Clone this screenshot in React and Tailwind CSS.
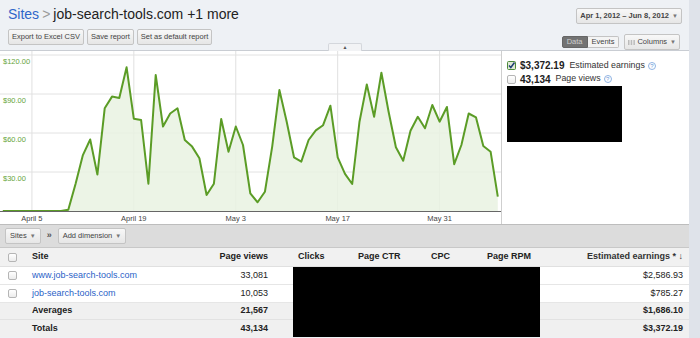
import React from 'react';

const earnings = [
  0, 0, 0, 0, 0, 0, 0, 0, 0, 1, 21, 43, 55, 28, 79, 88, 87, 110.5, 71, 70,
  21, 104.6, 65, 75, 79, 54.6, 49.5, 40.5, 12.3, 21, 70.8, 45.6, 65, 50.8,
  13.6, 6.7, 14.8, 49.5, 93, 68.7, 41.3, 38, 54.6, 62, 66, 81, 41.3, 28.5,
  20.8, 68.7, 97.4, 72.5, 106.4, 76.4, 49, 38.7, 61.8, 72.5, 63.6, 81.5,
  68.7, 80, 36, 50.8, 75, 72, 50, 45.6, 11,
];

const px = (i) => 2.8 + 7.28 * i;
const py = (v) => 160 - 1.3 * v;

const linePoints = earnings.map((v, i) => `${px(i).toFixed(1)},${py(v).toFixed(1)}`).join(' ');
const areaPoints = `${px(0)},160 ${linePoints} ${px(68).toFixed(1)},160`;

// Y axis labels and grid
const yTicks = [
  { label: '$120.00', y: 4 },
  { label: '$90.00', y: 43 },
  { label: '$60.00', y: 82 },
  { label: '$30.00', y: 121 },
];

const xTicks = [
  { label: 'April 5', i: 4 },
  { label: 'April 19', i: 18 },
  { label: 'May 3', i: 32 },
  { label: 'May 17', i: 46 },
  { label: 'May 31', i: 60 },
];

const rows = [
  { site: 'www.job-search-tools.com', views: '33,081', earn: '$2,586.93' },
  { site: 'job-search-tools.com', views: '10,053', earn: '$785.27' },
];

const Btn = ({ children, className = '' }) => (
  <div
    className={`h-[16px] px-[3px] flex items-center border border-[#c4c4c4] rounded-[2px] bg-gradient-to-b from-[#f8f8f8] to-[#e6e6e6] text-[7.5px] text-[#444] ${className}`}
  >
    {children}
  </div>
);

const Caret = () => <span className="ml-[3px] text-[6px] text-[#777]">▼</span>;

const Help = () => (
  <span className="ml-[3px] inline-flex w-[8px] h-[8px] rounded-full border border-[#8fb3e3] text-[6px] leading-none text-[#6a9ad8] items-center justify-center">
    ?
  </span>
);

const Box = () => (
  <span className="inline-block w-[9px] h-[9px] rounded-[2px] border border-[#b5b5b5] bg-gradient-to-b from-white to-[#ececec]" />
);

const App = () => {
  return (
    <div
      className="w-[700px] h-[338px] flex overflow-hidden bg-[#dfe3ea]"
      style={{ fontFamily: '"Liberation Sans", Arial, sans-serif' }}
    >
      <div className="w-[689px] flex flex-col bg-[#eef1f5]">
        {/* Header */}
        <div className="h-[50px] flex justify-between pl-[8px] pr-[7px]">
          <div className="flex flex-col">
            <div className="pt-[6px] text-[14px] leading-[16px] text-[#222]">
              <span className="text-[#2f66c9]">Sites</span>
              <span className="text-[#9a9a9a] mx-[3px]">&gt;</span>
              job-search-tools.com +1 more
            </div>
            <div className="mt-[7px] flex gap-[3px]">
              <Btn>Export to Excel CSV</Btn>
              <Btn>Save report</Btn>
              <Btn>Set as default report</Btn>
            </div>
          </div>
          <div className="flex flex-col items-end">
            <Btn className="mt-[8px] h-[15px] font-bold text-[#222]">
              Apr 1, 2012 – Jun 8, 2012
              <Caret />
            </Btn>
            <div className="mt-[10px] flex items-center pr-[2px]">
              <div className="h-[12px] px-[4px] flex items-center bg-[#737373] text-[#cfcfcf] text-[7.5px] rounded-l-[2px] border border-[#666]">
                Data
              </div>
              <div className="h-[12px] px-[4px] flex items-center bg-[#f4f4f4] text-[#444] text-[7.5px] rounded-r-[2px] border border-l-0 border-[#c4c4c4]">
                Events
              </div>
              <Btn className="ml-[5px] h-[12px]">
                <svg width="7" height="5" viewBox="0 0 7 5" className="mr-[2px]">
                  <rect x="0" y="0" width="1.5" height="5" fill="#bbb" />
                  <rect x="2.7" y="0" width="1.5" height="5" fill="#bbb" />
                  <rect x="5.4" y="0" width="1.5" height="5" fill="#bbb" />
                </svg>
                Columns
                <Caret />
              </Btn>
            </div>
          </div>
        </div>

        {/* Chart panel */}
        <div className="relative flex border-t border-[#c9cdd3] bg-white h-[174px]">
          <div className="absolute left-[328px] top-[-8px] w-[34px] h-[8px] bg-[#f2f3f5] border border-b-0 border-[#d4d7dc] rounded-t-[2px] flex items-center justify-center">
            <span className="text-[5px] leading-none text-[#555]">▲</span>
          </div>
          <svg width="501" height="173" viewBox="0 0 501 173" className="shrink-0">
            {yTicks.map((t) => (
              <line key={t.label} x1="0" x2="501" y1={t.y} y2={t.y} stroke="#e2e2e2" strokeWidth="1" />
            ))}
            {xTicks.map((t) => (
              <line key={t.label} x1={px(t.i)} x2={px(t.i)} y1="0" y2="160" stroke="#e0e0e0" strokeWidth="1" />
            ))}
            <polygon points={areaPoints} fill="#e9f2e2" fillOpacity="0.85" />
            <polyline points={linePoints} fill="none" stroke="#5b9c26" strokeWidth="2" strokeLinejoin="round" />
            <line x1="0" x2="501" y1="160.5" y2="160.5" stroke="#666" strokeWidth="1" />
            {yTicks.map((t) => (
              <text key={t.label} x="3" y={t.y + 9} fontSize="7.5" fill="#66a43a">
                {t.label}
              </text>
            ))}
            {xTicks.map((t) => (
              <text key={t.label} x={px(t.i)} y="170" fontSize="7.5" fill="#444" textAnchor="middle">
                {t.label}
              </text>
            ))}
          </svg>
          <div className="flex-1 border-l border-[#cfcfcf] pl-[5px] pt-[9px]">
            <div className="flex items-center h-[11px]">
              <svg width="9" height="9" viewBox="0 0 9 9" className="mr-[4px]">
                <rect x="0.5" y="0.5" width="8" height="8" rx="1" fill="#dfe9d6" stroke="#4d8a3a" />
                <path d="M2 4.5 L3.8 6.5 L7.5 1.5" fill="none" stroke="#1f3f74" strokeWidth="1.5" />
              </svg>
              <span className="text-[10px] font-bold text-[#222]">$3,372.19</span>
              <span className="ml-[5px] text-[8.8px] text-[#333]">Estimated earnings</span>
              <Help />
            </div>
            <div className="flex items-center h-[12px] mt-[2px]">
              <span className="mr-[4px] flex"><Box /></span>
              <span className="text-[10px] font-bold text-[#222]">43,134</span>
              <span className="ml-[5px] text-[8.8px] text-[#333]">Page views</span>
              <Help />
            </div>
            <div className="mt-[1px] w-[115px] h-[56px] bg-black" />
          </div>
        </div>

        {/* Toolbar */}
        <div className="h-[23px] border-t border-[#bdbdbd] bg-[#dcdcdc] flex items-center pl-[5px]">
          <Btn className="h-[13px] px-[4px]">
            Sites
            <Caret />
          </Btn>
          <span className="mx-[6px] text-[9px] font-bold text-[#555]">»</span>
          <Btn className="h-[13px] px-[4px]">
            Add dimension
            <Caret />
          </Btn>
        </div>

        {/* Table */}
        <div className="relative bg-white text-[9px] text-[#222]">
          <div className="h-[20px] flex items-center bg-[#f1f1f1] border-t border-[#c8c8c8] border-b border-b-[#e0e0e0] font-bold">
            <div className="w-[28px] pl-[8px] flex"><Box /></div>
            <div className="w-[172px] pl-[4px]">Site</div>
            <div className="w-[68px] text-right">Page views</div>
            <div className="w-[90px] pl-[30px]">Clicks</div>
            <div className="w-[73px]">Page CTR</div>
            <div className="w-[56px]">CPC</div>
            <div className="w-[60px]">Page RPM</div>
            <div className="flex-1 text-right pr-[6px] text-[#333]">Estimated earnings * ↓</div>
          </div>
          {rows.map((r) => (
            <div key={r.site} className="h-[18px] flex items-center border-b border-[#e6e6e6]">
              <div className="w-[28px] pl-[8px] flex"><Box /></div>
              <div className="w-[172px] pl-[4px] text-[#2b5fc7]">{r.site}</div>
              <div className="w-[68px] text-right">{r.views}</div>
              <div className="flex-1 text-right pr-[6px]">{r.earn}</div>
            </div>
          ))}
          <div className="h-[17px] flex items-center bg-[#f0f0f0] border-b border-[#e2e2e2] font-bold">
            <div className="w-[28px]" />
            <div className="w-[172px] pl-[4px]">Averages</div>
            <div className="w-[68px] text-right">21,567</div>
            <div className="flex-1 text-right pr-[6px]">$1,686.10</div>
          </div>
          <div className="h-[17px] flex items-center bg-[#f0f0f0] font-bold">
            <div className="w-[28px]" />
            <div className="w-[172px] pl-[4px]">Totals</div>
            <div className="w-[68px] text-right">43,134</div>
            <div className="flex-1 text-right pr-[6px]">$3,372.19</div>
          </div>
          {/* redacted columns */}
          <div className="absolute left-[293px] top-[20px] w-[247px] bottom-0 bg-black" />
        </div>
      </div>
    </div>
  );
};

export default App;
